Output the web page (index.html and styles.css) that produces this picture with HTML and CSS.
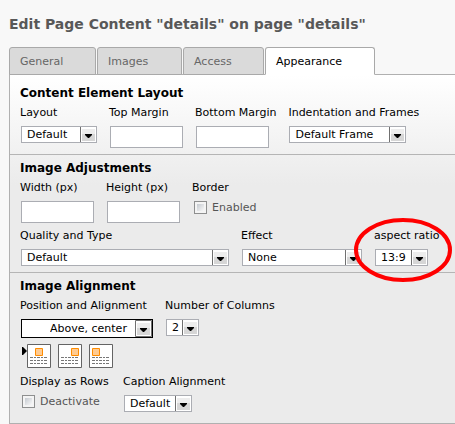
FILE: index.html
```html
<!DOCTYPE html>
<html lang="en">
<head>
<meta charset="utf-8">
<title>Edit Page Content</title>
<link rel="stylesheet" href="styles.css">
</head>
<body>
<h1>Edit Page Content "details" on page "details"</h1>
<nav class="tabs">
  <button class="tab tab-general" type="button">General</button>
  <button class="tab tab-images" type="button">Images</button>
  <button class="tab tab-access" type="button">Access</button>
  <button class="tab tab-appearance active" type="button">Appearance</button>
</nav>
<form class="panel">
  <section class="group first">
    <h2>Content Element Layout</h2>
    <div class="row">
      <div class="field">
        <label for="layout">Layout</label>
        <select id="layout" class="w-layout"><option>Default</option></select>
      </div>
      <div class="field">
        <label for="top">Top Margin</label>
        <input id="top" type="text">
      </div>
      <div class="field">
        <label for="bottom">Bottom Margin</label>
        <input id="bottom" type="text">
      </div>
      <div class="field">
        <label for="frames">Indentation and Frames</label>
        <select id="frames" class="w-frames"><option>Default Frame</option></select>
      </div>
    </div>
  </section>
  <section class="group">
    <h2>Image Adjustments</h2>
    <div class="row">
      <div class="field">
        <label for="width">Width (px)</label>
        <input id="width" type="text">
      </div>
      <div class="field">
        <label for="height">Height (px)</label>
        <input id="height" type="text">
      </div>
      <div class="field">
        <span class="caption">Border</span>
        <div class="check"><input id="border" type="checkbox"><label for="border">Enabled</label></div>
      </div>
    </div>
    <div class="row">
      <div class="field">
        <label for="quality">Quality and Type</label>
        <select id="quality" class="w-quality"><option>Default</option></select>
      </div>
      <div class="field">
        <label for="effect">Effect</label>
        <select id="effect" class="w-effect"><option>None</option></select>
      </div>
      <div class="field marked">
        <label for="ratio">aspect ratio</label>
        <select id="ratio" class="w-ratio"><option>13:9</option></select>
        <svg class="ring" width="100" height="66" viewBox="0 0 100 66" aria-hidden="true"><ellipse cx="50" cy="33" rx="47" ry="30" fill="none" stroke="#f00" stroke-width="4"/></svg>
      </div>
    </div>
  </section>
  <section class="group last">
    <h2>Image Alignment</h2>
    <div class="row">
      <div class="field">
        <label for="position">Position and Alignment</label>
        <select id="position" class="w-position"><option>Above, center</option></select>
        <div class="thumbs">
          <svg class="pointer" width="5" height="8" viewBox="0 0 5 8" aria-hidden="true"><path d="M0 0h1l4 4-4 4H0z"/></svg>
          <button type="button" aria-label="Above, center"><svg width="24" height="24" viewBox="0 0 24 24"><path class="paper" d="M.5.5h23v23H.5z"/><path class="photo" d="M8.5 4.5h7v7h-7z"/><path class="lines" d="M3 13.5h18M3 16.5h18M3 19.5h18"/></svg></button>
          <button type="button" aria-label="Above, right"><svg width="24" height="24" viewBox="0 0 24 24"><path class="paper" d="M.5.5h23v23H.5z"/><path class="photo" d="M13.5 4.5h7v7h-7z"/><path class="lines" d="M3 13.5h18M3 16.5h18M3 19.5h18"/></svg></button>
          <button type="button" aria-label="Above, left"><svg width="24" height="24" viewBox="0 0 24 24"><path class="paper" d="M.5.5h23v23H.5z"/><path class="photo" d="M3.5 4.5h7v7h-7z"/><path class="lines" d="M3 13.5h18M3 16.5h18M3 19.5h18"/></svg></button>
        </div>
      </div>
      <div class="field">
        <label for="columns">Number of Columns</label>
        <select id="columns" class="w-columns"><option>2</option></select>
      </div>
    </div>
    <div class="row">
      <div class="field w-rows">
        <span class="caption">Display as Rows</span>
        <div class="check"><input id="rows" type="checkbox"><label for="rows">Deactivate</label></div>
      </div>
      <div class="field">
        <label for="caption">Caption Alignment</label>
        <select id="caption" class="w-caption"><option>Default</option></select>
      </div>
    </div>
  </section>
</form>
</body>
</html>
```
FILE: styles.css
```css
* {
  box-sizing: border-box;
}

body {
  margin: 0;
  padding: 14px 0 0 9px;
  background: #f8f8f8;
  color: #000;
  font: 11px/20px Verdana, "DejaVu Sans", sans-serif;
  overflow: hidden;
}

h1 {
  margin: 0 0 13px;
  font-size: 14px;
  line-height: 20px;
  color: #585858;
  white-space: nowrap;
}

h2 {
  margin: 0;
  font-size: 12px;
  line-height: 20px;
}

button,
input,
select {
  margin: 0;
  font: inherit;
  color: inherit;
}

.tabs {
  display: flex;
  gap: 1px;
}

.tab {
  height: 28px;
  padding: 2px 10px 0;
  border: 1px solid #a9a9a9;
  border-radius: 3px 3px 0 0;
  background: #dadada;
  color: #666;
  text-align: left;
}

.tab-general {
  width: 87px;
}

.tab-images {
  width: 85px;
}

.tab-access {
  width: 81px;
}

.tab-appearance {
  width: 110px;
}

.tab.active {
  position: relative;
  border-bottom-color: #fff;
  background: #fff;
  color: #000;
}

.panel {
  margin-top: -1px;
  border: solid #b0b0b0;
  border-width: 1px 0 1px 1px;
  background: linear-gradient(#fff, #ebebeb 110px);
}

.group {
  padding: 3px 0 6px 10px;
  border-top: 1px solid #b5b5b5;
}

.group.first {
  padding-top: 8px;
  border-top: 0;
}

.group.last {
  padding-bottom: 11px;
}

.row {
  display: flex;
  gap: 12px;
}

.row + .row {
  margin-top: 3px;
}

.last .row + .row {
  margin-top: 4px;
}

.field {
  display: flex;
  flex-direction: column;
  align-items: flex-start;
  white-space: nowrap;
}

.field > input,
.field > select {
  margin: 3px 0 0 1px;
}

input[type="text"] {
  width: 73px;
  height: 22px;
  padding: 0 4px;
  border: 1px solid #abadb3;
  background: #fff;
}

select {
  appearance: none;
  height: 17px;
  padding: 0 18px 0 5px;
  border: 1px solid #abadb3;
  border-radius: 0;
  background: #fff url("data:image/svg+xml,%3Csvg xmlns='http://www.w3.org/2000/svg' width='17' height='17'%3E%3Cpath fill='%23fff' stroke='%23707070' d='M.5.5h16v16H.5z'/%3E%3Cpath fill='%23ededed' d='M2 3h13v5H2z'/%3E%3Cpath fill='%23d6d6d6' d='M2 8h13v7H2z'/%3E%3Cpath d='M5 8h7v1l-3 3H8L5 9z'/%3E%3C/svg%3E") right center no-repeat;
  background-origin: border-box;
  line-height: 15px;
}

.w-layout {
  width: 76px;
}

.w-frames {
  width: 117px;
}

.w-quality {
  width: 208px;
}

.w-effect {
  width: 120px;
}

.w-ratio {
  width: 53px;
}

.w-columns {
  width: 33px;
}

.w-caption {
  width: 68px;
}

.w-rows {
  width: 91px;
}

.w-position {
  width: 132px;
  height: 19px;
  padding-left: 28px;
  border-color: #000;
  background-origin: padding-box;
}

.check {
  display: flex;
  align-items: center;
  gap: 5px;
  margin: 3px 0 0 2px;
  color: #555;
  line-height: 13px;
}

input[type="checkbox"] {
  appearance: none;
  width: 13px;
  height: 13px;
  border: 1px solid #8e8f8f;
  background: linear-gradient(135deg, #c5cad0, #f8f8f8) content-box, #f4f4f4;
  padding: 2px;
}

.marked {
  position: relative;
}

.ring {
  position: absolute;
  top: -9px;
  left: -21px;
  pointer-events: none;
}

.thumbs {
  display: flex;
  gap: 7px;
  margin: 6px 0 0 2px;
}

.thumbs button {
  width: 24px;
  height: 24px;
  padding: 0;
  border: 0;
  background: none;
}

.thumbs svg {
  display: block;
}

.pointer {
  margin: 3px -7px 0 0;
}

.paper {
  fill: #fff;
  stroke: #646464;
}

.photo {
  fill: #ffcb91;
  stroke: #ff8c00;
}

.lines {
  fill: none;
  stroke: #777;
  stroke-dasharray: 3 1 2 1;
}
```
